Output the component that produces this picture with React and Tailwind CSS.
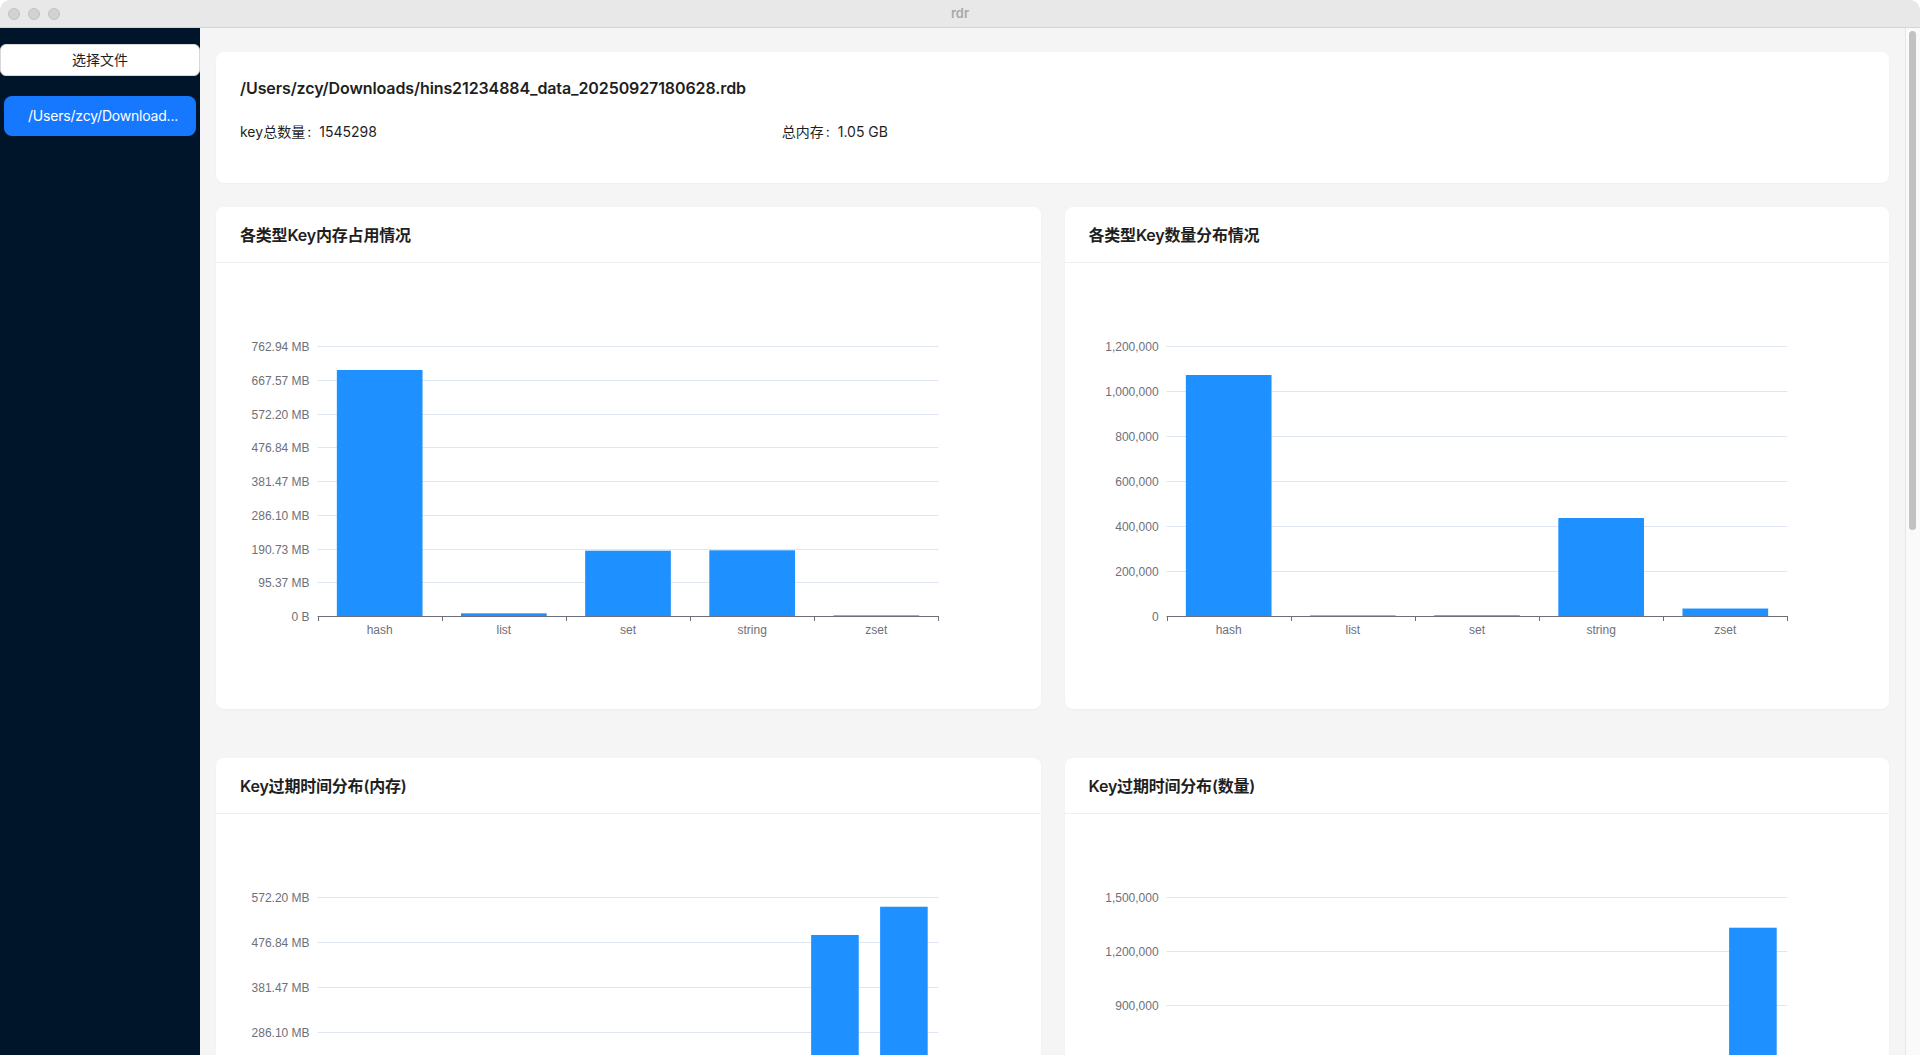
const MEM_CATS = ['hash', 'list', 'set', 'string', 'zset']

const CHARTS = [
  {
    title: '各类型Key内存占用情况',
    ticks: ['0 B', '95.37 MB', '190.73 MB', '286.10 MB', '381.47 MB', '476.84 MB', '572.20 MB', '667.57 MB', '762.94 MB'],
    max: 762.94,
    categories: MEM_CATS,
    values: [695.1, 7.6, 184.5, 185.6, 1.8],
  },
  {
    title: '各类型Key数量分布情况',
    ticks: ['0', '200,000', '400,000', '600,000', '800,000', '1,000,000', '1,200,000'],
    max: 1200000,
    categories: MEM_CATS,
    values: [1071100, 2600, 3200, 435500, 33200],
  },
  {
    title: 'Key过期时间分布(内存)',
    ticks: ['0 B', '95.37 MB', '190.73 MB', '286.10 MB', '381.47 MB', '476.84 MB', '572.20 MB'],
    max: 572.2,
    categories: ['已过期', '1小时内', '3小时内', '12小时内', '1天内', '3天内', '7天内', '30天内', '永不过期'],
    values: [0.4, 1.2, 2.1, 3.5, 6.2, 9.8, 14.3, 491.7, 551.6],
  },
  {
    title: 'Key过期时间分布(数量)',
    ticks: ['0', '300,000', '600,000', '900,000', '1,200,000', '1,500,000'],
    max: 1500000,
    categories: ['已过期', '1小时内', '3小时内', '12小时内', '1天内', '3天内', '7天内', '30天内', '永不过期'],
    values: [120, 860, 1900, 3400, 6100, 9200, 14800, 188000, 1329400],
  },
]

function BarChart({ ticks, max, categories, values }) {
  const W = 776
  const H = 390
  const x0 = 77.6
  const x1 = 698.4
  const y0 = 60
  const y1 = 330
  const cw = (x1 - x0) / categories.length
  const step = (y1 - y0) / (ticks.length - 1)
  const font = "'Liberation Sans', Arial, sans-serif"

  return (
    <svg width={W} height={H} className="block">
      {ticks.map((t, i) => {
        const y = Math.round(y1 - i * step) + 0.5
        return (
          <g key={t}>
            {i > 0 && <line x1={x0} x2={x1} y1={y} y2={y} stroke="#E0E6F1" />}
            <text x={x0 - 8} y={y} textAnchor="end" dominantBaseline="central" fontSize="12" fill="#6E7079" fontFamily={font}>
              {t}
            </text>
          </g>
        )
      })}
      {values.map((v, i) => {
        const bw = cw * 0.69
        const bx = x0 + i * cw + (cw - bw) / 2
        const by = y1 - (v / max) * (y1 - y0)
        return <rect key={i} x={bx} y={by} width={bw} height={y1 - by} fill="#1E90FF" />
      })}
      <line x1={x0} x2={x1} y1={y1 + 0.5} y2={y1 + 0.5} stroke="#6E7079" />
      {categories.map((c, i) => (
        <g key={c}>
          <line x1={Math.round(x0 + i * cw) + 0.5} x2={Math.round(x0 + i * cw) + 0.5} y1={y1} y2={y1 + 5} stroke="#6E7079" />
          <text x={x0 + (i + 0.5) * cw} y={y1 + 14} textAnchor="middle" dominantBaseline="central" fontSize="12" fill="#6E7079" fontFamily={font}>
            {c}
          </text>
        </g>
      ))}
      <line x1={Math.round(x1) + 0.5} x2={Math.round(x1) + 0.5} y1={y1} y2={y1 + 5} stroke="#6E7079" />
    </svg>
  )
}

function ChartCard({ chart }) {
  return (
    <div className="bg-white rounded-lg shadow-[0_1px_2px_rgba(0,0,0,0.03)]">
      <div className="h-[56px] flex items-center px-6 border-b border-[#f0f0f0] text-base font-semibold text-[#1f1f1f] tracking-[-0.2px]">
        {chart.title}
      </div>
      <div className="px-6 pt-[23px] pb-[33px]">
        <BarChart {...chart} />
      </div>
    </div>
  )
}

export default function App() {
  return (
    <div className="h-screen bg-white">
      <div className="h-full flex flex-col rounded-t-[10px] overflow-hidden font-['Inter','Noto_Sans_CJK_SC',sans-serif]">
        {/* Title bar */}
        <div className="h-[28px] shrink-0 grid grid-cols-[1fr_auto_1fr] items-center bg-[#e8e8e8] border-b border-[#d4d4d4]">
          <div className="flex items-center gap-2 pl-2">
            <span className="w-3 h-3 rounded-full bg-[#d2d2d2] border border-[#c2c2c2]" />
            <span className="w-3 h-3 rounded-full bg-[#d2d2d2] border border-[#c2c2c2]" />
            <span className="w-3 h-3 rounded-full bg-[#d2d2d2] border border-[#c2c2c2]" />
          </div>
          <div className="text-[13px] font-semibold text-[#a9a9a9]">rdr</div>
          <div />
        </div>

        <div className="flex-1 flex min-h-0">
          {/* Sidebar */}
          <div className="w-[200px] shrink-0 bg-[#001529] pt-4">
            <button className="w-full h-8 bg-white rounded-md border border-[#d9d9d9] text-sm text-[#1f1f1f]">
              选择文件
            </button>
            <div className="mt-5 mx-1 h-10 rounded-lg bg-[#1677ff] flex items-center pl-6 pr-4 text-sm text-white whitespace-nowrap tracking-[-0.2px]">
              /Users/zcy/Download...
            </div>
          </div>

          {/* Main */}
          <div className="flex-1 min-w-0 bg-[#f5f5f5] px-4 pt-6 overflow-hidden">
            <div className="bg-white rounded-lg p-6 shadow-[0_1px_2px_rgba(0,0,0,0.03)]">
              <div className="text-base leading-6 font-semibold text-[#1f1f1f] mb-[21px] tracking-[-0.1px]">
                /Users/zcy/Downloads/hins21234884_data_20250927180628.rdb
              </div>
              <div className="grid grid-cols-3 pb-4 text-sm leading-[22px] text-[#1f1f1f]">
                <div>
                  key总数量<span className="ml-[2px] mr-2">:</span>1545298
                </div>
                <div>
                  总内存<span className="ml-[2px] mr-2">:</span>1.05 GB
                </div>
                <div />
              </div>
            </div>

            <div className="grid grid-cols-2 gap-6 mt-6">
              <ChartCard chart={CHARTS[0]} />
              <ChartCard chart={CHARTS[1]} />
            </div>
            <div className="grid grid-cols-2 gap-6 mt-[49px]">
              <ChartCard chart={CHARTS[2]} />
              <ChartCard chart={CHARTS[3]} />
            </div>
          </div>

          {/* Scrollbar */}
          <div className="w-[15px] shrink-0 bg-[#fafafa] border-l border-[#e6e6e6] pt-[3px] pl-[3px]">
            <div className="w-[7px] h-[499px] rounded-full bg-[#c2c2c2]" />
          </div>
        </div>
      </div>
    </div>
  )
}
